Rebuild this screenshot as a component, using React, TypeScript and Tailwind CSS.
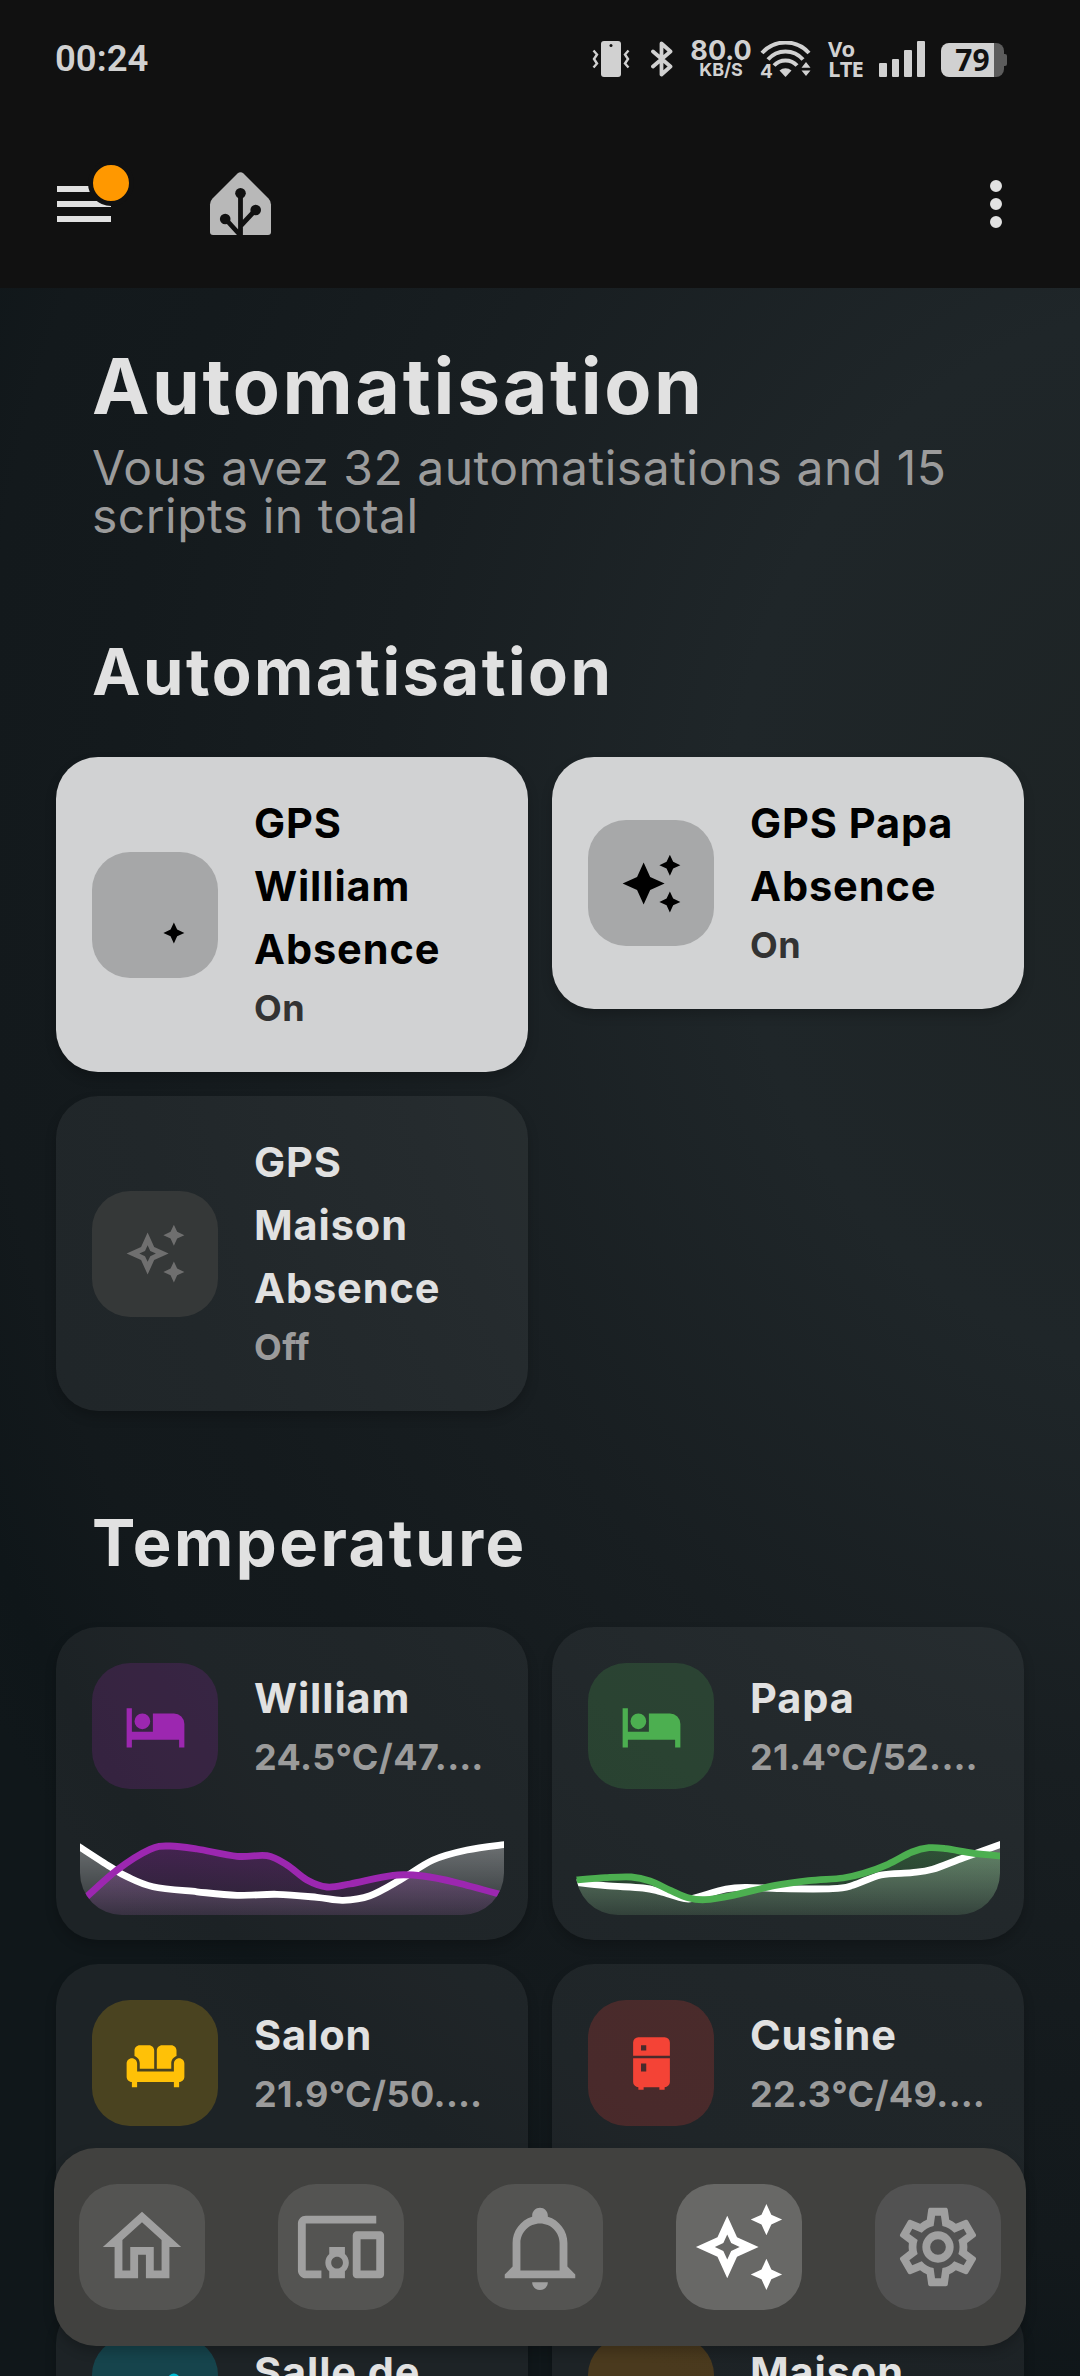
import type { ReactNode } from "react";

type Point = [number, number];

/* ---------- icon paths on a 24 unit grid ---------- */
const STAR_SMALL_LOW = "M19,15L17.74,17.74L15,19L17.74,20.25L19,23L20.25,20.25L23,19L20.25,17.74";
const CREATION =
  "M19,1L17.74,3.75L15,5L17.74,6.26L19,9L20.25,6.26L23,5L20.25,3.75M9,4L6.5,9.5L1,12L6.5,14.5L9,20L11.5,14.5L17,12L11.5,9.5M19,15L17.74,17.74L15,19L17.74,20.25L19,23L20.25,20.25L23,19L20.25,17.74";
const CREATION_OUTLINE =
  "M9 4L6.5 9.5L1 12L6.5 14.5L9 20L11.5 14.5L17 12L11.5 9.5L9 4M9 8.83L10 11L12.17 12L10 13L9 15.17L8 13L5.83 12L8 11L9 8.83M19 9L17.74 6.26L15 5L17.74 3.75L19 1L20.25 3.75L23 5L20.25 6.26L19 9M19 23L17.74 20.26L15 19L17.74 17.75L19 15L20.25 17.75L23 19L20.25 20.26L19 23Z";
const BED =
  "M19,7H11V14H3V5H1V20H3V17H21V20H23V11A4,4 0 0,0 19,7M7,13A3,3 0 0,0 10,10A3,3 0 0,0 7,7A3,3 0 0,0 4,10A3,3 0 0,0 7,13Z";
const SOFA =
  "M12.5 7C12.5 5.89 13.39 5 14.5 5H18C19.1 5 20 5.9 20 7V9.16C18.84 9.57 18 10.67 18 11.97V14H12.5V7M6 11.96V14H11.5V7C11.5 5.89 10.61 5 9.5 5H6C4.9 5 4 5.9 4 7V9.15C5.16 9.56 6 10.67 6 11.96M20.66 10.03C19.68 10.19 19 11.12 19 12.12V15H5V12C5 10.9 4.11 10 3 10S1 10.9 1 12V17C1 18.1 1.9 19 3 19V21H5V19H19V21H21V19C22.1 19 23 18.1 23 17V12C23 10.79 21.91 9.82 20.66 10.03Z";
const FRIDGE =
  "M7,2H17A2,2 0 0,1 19,4V9H5V4A2,2 0 0,1 7,2M19,19A2,2 0 0,1 17,21V22H15V21H9V22H7V21A2,2 0 0,1 5,19V10H19V19M8,5V7H10V5H8M8,12V15H10V12H8Z";
const SHOWER = "M19 1.7A2.3 2.3 0 0 1 19 6.3A2.3 2.3 0 0 1 19 1.7Z";
const HOME = "M12,5.69L17,10.19V18H15V12H9V18H7V10.19L12,5.69M12,3L2,12H5V20H11V14H13V20H19V12H22";
const DEVICES =
  "M3 6h18V4H3c-1.1 0-2 .9-2 2v12c0 1.1.9 2 2 2h4v-2H3V6zm10 6H9v1.78c-.61.55-1 1.33-1 2.22s.39 1.67 1 2.22V20h4v-1.78c.61-.55 1-1.34 1-2.22s-.39-1.67-1-2.22V12zm-2 5.5c-.83 0-1.5-.67-1.5-1.5s.67-1.5 1.5-1.5 1.5.67 1.5 1.5-.67 1.5-1.5 1.5zM22 8h-6c-.5 0-1 .5-1 1v10c0 .5.5 1 1 1h6c.5 0 1-.5 1-1V9c0-.5-.5-1-1-1zm-1 10h-4v-8h4v8z";
const BELL =
  "M10 21H14C14 22.1 13.1 23 12 23S10 22.1 10 21M21 19V20H3V19L5 17V11C5 7.9 7.03 5.17 10 4.29C10 4.19 10 4.1 10 4C10 2.9 10.9 2 12 2S14 2.9 14 4C14 4.1 14 4.19 14 4.29C16.97 5.17 19 7.9 19 11V17L21 19M17 11C17 8.24 14.76 6 12 6S7 8.24 7 11V18H17V11Z";
const COG =
  "M12,8A4,4 0 0,1 16,12A4,4 0 0,1 12,16A4,4 0 0,1 8,12A4,4 0 0,1 12,8M12,10A2,2 0 0,0 10,12A2,2 0 0,0 12,14A2,2 0 0,0 14,12A2,2 0 0,0 12,10M10,22C9.75,22 9.54,21.82 9.5,21.58L9.13,18.93C8.5,18.68 7.96,18.34 7.44,17.94L4.95,18.95C4.73,19.03 4.46,18.95 4.34,18.73L2.34,15.27C2.21,15.05 2.27,14.78 2.46,14.63L4.57,12.97L4.5,12L4.57,11L2.46,9.37C2.27,9.22 2.21,8.95 2.34,8.73L4.34,5.27C4.46,5.05 4.73,4.96 4.95,5.05L7.44,6.05C7.96,5.66 8.5,5.32 9.13,5.07L9.5,2.42C9.54,2.18 9.75,2 10,2H14C14.25,2 14.46,2.18 14.5,2.42L14.87,5.07C15.5,5.32 16.04,5.66 16.56,6.05L19.05,5.05C19.27,4.96 19.54,5.05 19.66,5.27L21.66,8.73C21.79,8.95 21.73,9.22 21.54,9.37L19.43,11L19.5,12L19.43,13L21.54,14.63C21.73,14.78 21.79,15.05 21.66,15.27L19.66,18.73C19.54,18.95 19.27,19.04 19.05,18.95L16.56,17.95C16.04,18.34 15.5,18.68 14.87,18.93L14.5,21.58C14.46,21.82 14.25,22 14,22H10M11.25,4L10.88,6.61C9.68,6.86 8.62,7.5 7.85,8.39L5.44,7.35L4.69,8.65L6.8,10.2C6.4,11.37 6.4,12.64 6.8,13.8L4.68,15.36L5.43,16.66L7.86,15.62C8.63,16.5 9.68,17.14 10.87,17.38L11.24,20H12.76L13.13,17.39C14.32,17.14 15.37,16.5 16.14,15.62L18.57,16.66L19.32,15.36L17.2,13.81C17.6,12.64 17.6,11.37 17.2,10.2L19.31,8.65L18.56,7.35L16.15,8.39C15.38,7.5 14.32,6.86 13.12,6.62L12.75,4H11.25Z";

function Icon({ d, className }: { d: string; className: string }) {
  return (
    <svg viewBox="0 0 24 24" className={className} fill="currentColor">
      <path d={d} />
    </svg>
  );
}

/* ---------- status bar ---------- */
function StatusBar() {
  return (
    <div className="flex h-[96px] items-start pl-[55px] pr-[73px] pt-[36px] text-[#d1d1d1]">
      <span className="font-['Roboto'] text-[36.5px] font-semibold leading-[46px]">00:24</span>
      <div className="ml-auto flex items-start">
        {/* ringer on vibrate */}
        <svg width="38" height="36" viewBox="0 0 38 36" className="mr-[21px] mt-[5px]">
          <rect x="9" width="20" height="36" rx="3" fill="#d1d1d1" />
          <circle cx="19" cy="4.600" r="1.500" fill="#111" />
          <path d="M1.500 9.500 5 13.500 2 18 5 22.500 1.500 26.500M36.500 9.500 33 13.500 36 18 33 22.500 36.500 26.500" fill="none" stroke="#d1d1d1" strokeWidth="2.400" />
        </svg>
        {/* bluetooth */}
        <svg width="22" height="36" viewBox="0 0 22 36" className="mr-[18px] mt-[5px]">
          <path d="M2 10.500 19.500 25.500 10.500 33.500V2.500L19.500 10.500 2 25.500" fill="none" stroke="#d1d1d1" strokeWidth="3.800" strokeLinejoin="round" strokeLinecap="round" />
        </svg>
        {/* network speed */}
        <div className="mr-[9px] mt-[4px] flex w-[60px] flex-col items-center font-['Inter'] font-bold">
          <span className="text-[27px] leading-[22px]">80.0</span>
          <span className="text-[18px] leading-[15px]">KB/S</span>
        </div>
        {/* wifi */}
        <div className="relative mr-[16px] mt-[5px] h-[38px] w-[52px]">
          <svg width="52" height="38" viewBox="0 0 52 38">
            <g fill="none" stroke="#d1d1d1" strokeWidth="4">
              <path d="M2 12A31.500 31.500 0 0 1 49 12" />
              <path d="M8 18.500A23 23 0 0 1 43 18.500" />
              <path d="M14 24.500A15.500 15.500 0 0 1 37 24.500" />
            </g>
            <path d="M25.500 36 19.500 29.500A9.500 9.500 0 0 1 31.500 29.500Z" fill="#d1d1d1" />
            <path d="M46 21 50.500 26.700H41.500ZM46 35 41.500 29.500H50.500Z" fill="#d1d1d1" />
          </svg>
          <span className="absolute left-0 top-[21px] font-['Inter'] text-[19px] font-bold leading-[19px]">4</span>
        </div>
        {/* volte */}
        <div className="mr-[18px] mt-[4px] flex w-[33px] flex-col font-['Open_Sans'] text-[22px] font-bold leading-[20px] tracking-[-0.800px]">
          <span className="-mt-[2px]">Vo</span>
          <span>LTE</span>
        </div>
        {/* signal */}
        <div className="mr-[16.400px] mt-[5px] flex h-[36px] items-end gap-[4.800px]">
          <i className="h-[14px] w-[7.800px] rounded-[1px] bg-[#d1d1d1]" />
          <i className="h-[18px] w-[7.800px] rounded-[1px] bg-[#d1d1d1]" />
          <i className="h-[27px] w-[7.800px] rounded-[1px] bg-[#d1d1d1]" />
          <i className="h-[36px] w-[7.800px] rounded-[1px] bg-[#d1d1d1]" />
        </div>
        {/* battery */}
        <div className="mt-[7px] flex items-center">
          <div className="flex h-[34px] w-[63px] items-center justify-center rounded-[8px] bg-[linear-gradient(90deg,#d1d1d1_53px,#5c5c5c_53px)]">
            <span className="font-['Open_Sans'] text-[30px] font-bold leading-[34px] text-[#111]">79</span>
          </div>
          <i className="h-[12px] w-[3px] rounded-r-[2px] bg-[#5c5c5c]" />
        </div>
      </div>
    </div>
  );
}

/* ---------- app bar ---------- */
function AppBar() {
  return (
    <div className="flex h-[192px] items-center pl-[48px] pr-[48px] pb-[12px] pt-[36px]">
      <div className="relative text-[#e1e1e1]">
        <Icon d="M3,6H21V8H3V6M3,11H21V13H3V11M3,16H21V18H3V16Z" className="size-[72px]" />
        <i className="absolute left-[40px] top-[-8px] size-[46px] rounded-full border-[5px] border-[#111111] bg-[#ff9800]" />
      </div>
      <svg width="72" height="72" viewBox="0 0 72 72" className="ml-[84px]">
        <path d="M33.500 5.500Q36.500 2.800 39.500 5.500L64.500 30.500Q67 33 67 36.500V64Q67 67 64 67H9Q6 67 6 64V36.500Q6 33 8.500 30.500Z" fill="#b8b8b8" />
        <g fill="none" stroke="#111" strokeWidth="4.800">
          <path d="M36.500 25V68M51.500 42 36.500 58M21.500 51 37 68" />
        </g>
        <g fill="#111">
          <circle cx="36.500" cy="25.200" r="5.300" />
          <circle cx="51.700" cy="42" r="5.300" />
          <circle cx="21.200" cy="51" r="5.300" />
        </g>
      </svg>
      <Icon
        d="M12,16A2,2 0 0,1 14,18A2,2 0 0,1 12,20A2,2 0 0,1 10,18A2,2 0 0,1 12,16M12,10A2,2 0 0,1 14,12A2,2 0 0,1 12,14A2,2 0 0,1 10,12A2,2 0 0,1 12,10M12,4A2,2 0 0,1 14,6A2,2 0 0,1 12,8A2,2 0 0,1 10,6A2,2 0 0,1 12,4Z"
        className="ml-auto size-[72px] text-[#e1e1e1]"
      />
    </div>
  );
}

/* ---------- cards ---------- */
type TileProps = {
  name: string[];
  state: string;
  icon: string;
  iconBox: string;
  nameColor?: string;
  stateColor?: string;
};

function Tile({ name, state, icon, iconBox, nameColor = "text-[#e1e1e1]", stateColor = "text-[#9b9b9b]" }: TileProps) {
  return (
    <div className="flex items-center gap-[36px]">
      <div className={`flex size-[126px] shrink-0 items-center justify-center rounded-[38px] ${iconBox}`}>
        <Icon d={icon} className="size-[63px]" />
      </div>
      <div className="-mt-px mb-px whitespace-nowrap font-bold">
        {name.map((line) => (
          <div key={line} className={`text-[41.5px] leading-[63px] tracking-[0.900px] ${nameColor}`}>
            {line}
          </div>
        ))}
        <div className={`h-[54px] text-[36px] font-[650] leading-[54px] tracking-[0.400px] ${stateColor}`}>{state}</div>
      </div>
    </div>
  );
}

const cardBase = "rounded-[42px] p-[36px] shadow-[0_6px_12px_rgba(0,0,0,0.2)]";

/* Catmull-Rom spline through the sample points */
function spline(p: Point[]) {
  let d = `M${p[0][0]} ${p[0][1]}`;
  for (let i = 0; i < p.length - 1; i++) {
    const a = p[Math.max(i - 1, 0)];
    const b = p[i];
    const c = p[i + 1];
    const e = p[Math.min(i + 2, p.length - 1)];
    d += `C${b[0] + (c[0] - a[0]) / 6} ${b[1] + (c[1] - a[1]) / 6} ${c[0] - (e[0] - b[0]) / 6} ${c[1] - (e[1] - b[1]) / 6} ${c[0]} ${c[1]}`;
  }
  return d;
}

function Chart({ id, color, white, tint }: { id: string; color: string; white: Point[]; tint: Point[] }) {
  const w = spline(white);
  const t = spline(tint);
  return (
    <div className="h-[93px] overflow-hidden rounded-b-[42px]">
      <svg width="424" height="93" viewBox="0 -13 424 93">
        <defs>
          <linearGradient id={`${id}w`} gradientUnits="userSpaceOnUse" x1="0" y1="8" x2="0" y2="80">
            <stop offset="0" stopColor="#fff" stopOpacity="0.35" />
            <stop offset="1" stopColor="#fff" stopOpacity="0.07" />
          </linearGradient>
          <linearGradient id={`${id}t`} gradientUnits="userSpaceOnUse" x1="0" y1="8" x2="0" y2="80">
            <stop offset="0" stopColor={color} stopOpacity="0.32" />
            <stop offset="1" stopColor={color} stopOpacity="0.1" />
          </linearGradient>
        </defs>
        <path d={`${w}V80H0Z`} fill={`url(#${id}w)`} />
        <path d={`${t}V80H0Z`} fill={`url(#${id}t)`} />
        <path d={w} fill="none" stroke="#fff" strokeWidth="6.800" />
        <path d={t} fill="none" stroke={color} strokeWidth="6.800" />
      </svg>
    </div>
  );
}

const williamWhite: Point[] = [[-2, 11], [30, 31.7], [47, 41.7], [73, 51.7], [117, 56.8], [157, 60.3], [197, 59.3], [237, 62.3], [263, 65.3], [290, 60.7], [320, 45], [353, 25], [387, 15], [426, 9.3]];
const williamPurple: Point[] = [[0, 68], [37, 35], [70, 14.3], [90, 11], [117, 14], [157, 21.3], [187, 20.7], [207, 30], [227, 45], [247, 52], [270, 49], [313, 40.3], [343, 41], [377, 47.7], [426, 61]];
const papaWhite: Point[] = [[-2, 47.3], [29.4, 50.7], [67, 53], [84.5, 56.7], [108.6, 63.7], [119, 62.7], [150, 54], [170.6, 52.3], [205, 53.7], [256.7, 53.7], [277, 50.3], [305, 40], [336, 37.7], [356.6, 34.3], [387.6, 22.7], [426, 9]];
const papaGreen: Point[] = [[-2, 45.2], [29.4, 42.7], [55.3, 42], [74, 46], [95, 55.7], [112, 62.7], [129, 64.7], [157, 60.3], [198, 50.7], [232.6, 45.7], [267, 43], [287.7, 38.3], [312, 29.3], [336, 17], [353, 12.7], [370, 13.7], [398, 18.3], [426, 21]];

function SensorCard({ tile, chart }: { tile: TileProps; chart?: ReactNode }) {
  return (
    <div className={`h-[313px] bg-white/[0.055] ${cardBase}`}>
      <Tile {...tile} />
      {chart && <div className="-mx-[12px] mt-[33px]">{chart}</div>}
    </div>
  );
}

/* ---------- bottom navigation ---------- */
const navItems = [
  { icon: HOME, style: "bg-[#545452] text-[#a0a0a0]" },
  { icon: DEVICES, style: "bg-[#545452] text-[#a0a0a0]" },
  { icon: BELL, style: "bg-[#545452] text-[#a0a0a0]" },
  { icon: CREATION_OUTLINE, style: "bg-[#686866] text-white" },
  { icon: COG, style: "bg-[#525252] text-[#a0a0a0]" },
];

function BottomNav() {
  return (
    <nav className="absolute left-[54px] top-[2148px] flex h-[198px] w-[972px] items-center justify-between rounded-[42px] bg-[#41413f] px-[25px] shadow-[0_6px_12px_rgba(0,0,0,0.2)]">
      {navItems.map(({ icon, style }, i) => (
        <div key={i} className={`flex size-[126px] items-center justify-center rounded-[38px] ${style}`}>
          <Icon d={icon} className="size-[94px] shrink-0" />
        </div>
      ))}
    </nav>
  );
}

const heading = "px-[92px] pt-[94px] text-[65px] font-bold leading-[76px] tracking-[2.500px] text-[#e1e1e1]";

export default function App() {
  return (
    <div className="relative h-[2376px] w-[1080px] overflow-hidden bg-[#111111] font-['Inter',sans-serif]">
      <StatusBar />
      <AppBar />
      <main className="h-[2088px] bg-[radial-gradient(ellipse_1400px_1650px_at_1180px_550px,#1d2324_0%,#1f2629_32%,#181e21_57%,#141a1d_76%,#13191c_86%,#0f1619_95%,#10171a_100%)]">
        <header className="pl-[92px] pt-[56px]">
          <h1 className="text-[77px] font-bold leading-[84px] tracking-[2.600px] text-[#e1e1e1]">Automatisation</h1>
          <p className="mt-[16px] text-[48px] leading-[48px] tracking-[0.500px] text-[#9b9b9b]">
            Vous avez 32 automatisations and 15
            <br />
            scripts in total
          </p>
        </header>

        <h2 className={heading}>Automatisation</h2>
        <section className="mt-[47px] grid grid-cols-2 items-start gap-[24px] px-[56px]">
          <div className={`bg-[#d1d2d3] ${cardBase}`}>
            <Tile name={["GPS", "William", "Absence"]} state="On" icon={STAR_SMALL_LOW} iconBox="bg-[#a6a7a8] text-black" nameColor="text-black" stateColor="text-[#333333]" />
          </div>
          <div className={`bg-[#d2d3d4] ${cardBase}`}>
            <Tile name={["GPS Papa", "Absence"]} state="On" icon={CREATION} iconBox="bg-[#a7a8a9] text-black" nameColor="text-black" stateColor="text-[#333333]" />
          </div>
          <div className={`bg-white/[0.06] ${cardBase}`}>
            <Tile name={["GPS", "Maison", "Absence"]} state="Off" icon={CREATION_OUTLINE} iconBox="bg-[#353838] text-[#6f6f6f]" />
          </div>
        </section>

        <h2 className={heading}>Temperature</h2>
        <section className="mt-[46px] grid grid-cols-2 items-start gap-[24px] px-[56px]">
          <SensorCard
            tile={{ name: ["William"], state: "24.5°C/47.…", icon: BED, iconBox: "bg-[#9c27b0]/20 text-[#9c27b0]" }}
            chart={<Chart id="a" color="#9c27b0" white={williamWhite} tint={williamPurple} />}
          />
          <SensorCard
            tile={{ name: ["Papa"], state: "21.4°C/52.…", icon: BED, iconBox: "bg-[#4caf50]/20 text-[#4caf50]" }}
            chart={<Chart id="b" color="#4caf50" white={papaWhite} tint={papaGreen} />}
          />
          <SensorCard tile={{ name: ["Salon"], state: "21.9°C/50.…", icon: SOFA, iconBox: "bg-[#ffc107]/20 text-[#ffc107]" }} />
          <SensorCard tile={{ name: ["Cusine"], state: "22.3°C/49.…", icon: FRIDGE, iconBox: "bg-[#f44336]/20 text-[#f44336]" }} />
          <SensorCard tile={{ name: ["Salle de"], state: "", icon: SHOWER, iconBox: "bg-[#00bcd4]/22 text-[#00bcd4]" }} />
          <SensorCard tile={{ name: ["Maison"], state: "", icon: "", iconBox: "bg-[#ff9800]/20 text-[#ff9800]" }} />
        </section>
      </main>
      <BottomNav />
    </div>
  );
}
